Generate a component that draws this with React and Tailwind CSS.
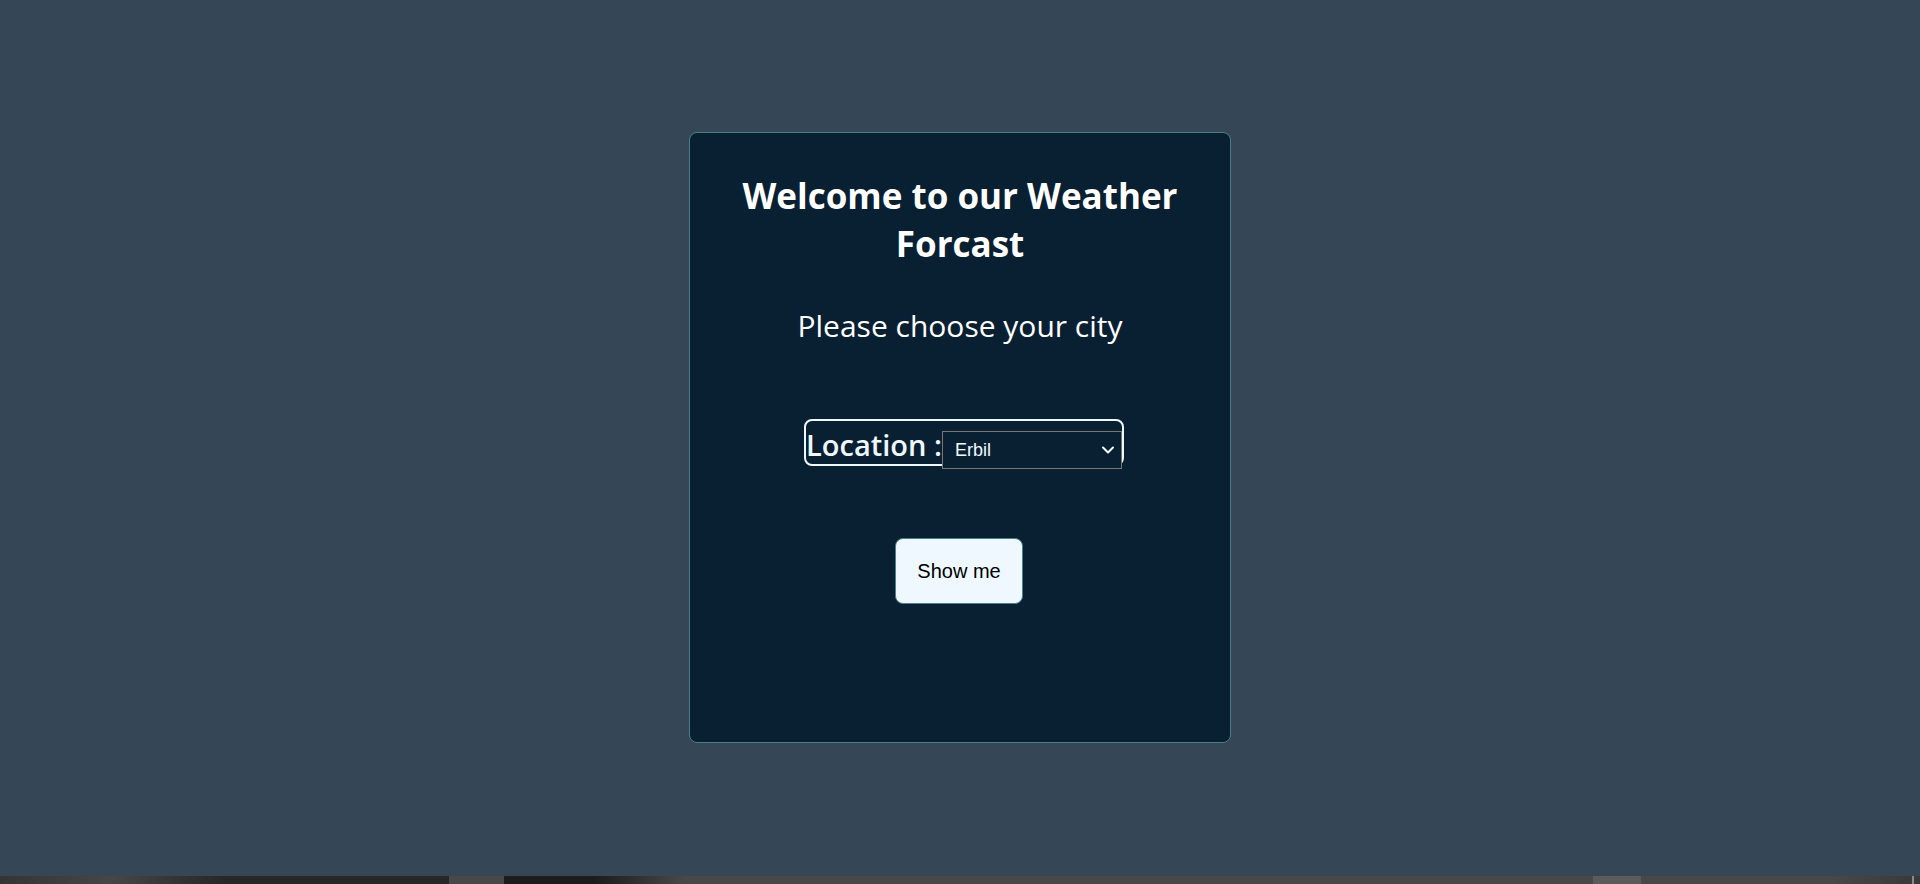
import { ChevronDown } from "lucide-react";

const cities = ["Erbil", "Duhok", "Sulaymaniyah", "Halabja", "Kirkuk"];

export default function App() {
  return (
    <div className="flex min-h-screen flex-col bg-[#354757] font-['Open_Sans','Noto_Sans',sans-serif] text-white">
      <main className="flex grow items-center justify-center px-4 pb-[2px]">
        <section className="flex w-full max-w-[542px] flex-col items-center rounded-lg border border-[#4a7f84] bg-[#092032] px-10 pt-[39px] pb-[138px]">
          <h1 className="text-center text-[35px] leading-[48px] font-bold">Welcome to our Weather Forcast</h1>
          <p className="mt-[38px] text-center text-[30px] leading-10">Please choose your city</p>
          <div className="mt-[73px] ml-2 flex h-[47px] items-start rounded-lg border-2 border-[#f0f8ff] text-[#f0f8ff]">
            <label htmlFor="city" className="text-[29px] leading-[48px] font-semibold">
              Location :
            </label>
            <div className="mt-[10px] grid w-[180px] items-center">
              <select
                id="city"
                className="col-start-1 row-start-1 h-[38px] appearance-none border border-[#767676] bg-[#092032] px-3 font-['Liberation_Sans',Arial,sans-serif] text-lg"
              >
                {cities.map((city) => (
                  <option key={city}>{city}</option>
                ))}
              </select>
              <ChevronDown className="pointer-events-none col-start-1 row-start-1 mr-1 size-5 justify-self-end" strokeWidth={2.5} />
            </div>
          </div>
          <button
            type="button"
            className="mt-[72px] mr-[2px] h-[66px] w-32 rounded-lg border border-[#4a7f84] bg-[#f0f8ff] font-['Liberation_Sans',Arial,sans-serif] text-xl text-black"
          >
            Show me
          </button>
        </section>
      </main>
      <footer className="flex h-2 bg-[#484848]">
        <div className="w-[449px] bg-linear-to-r from-[#343434] via-[#464646] via-25% to-[#272727] to-50%" />
        <div className="w-[55px] bg-[#484848]" />
        <div className="w-[180px] bg-linear-to-r from-[#1c1c1c] from-50% to-[#484848]" />
        <div className="grow bg-[#484848]" />
        <div className="w-12 bg-[#5b5b5b]" />
        <div className="w-[271px] bg-linear-to-r from-[#484848] from-70% to-[#3a3a3a]" />
        <div className="w-[2px] bg-[#8a8a8a]" />
        <div className="w-[6px] bg-[#3a3a3a]" />
      </footer>
    </div>
  );
}
